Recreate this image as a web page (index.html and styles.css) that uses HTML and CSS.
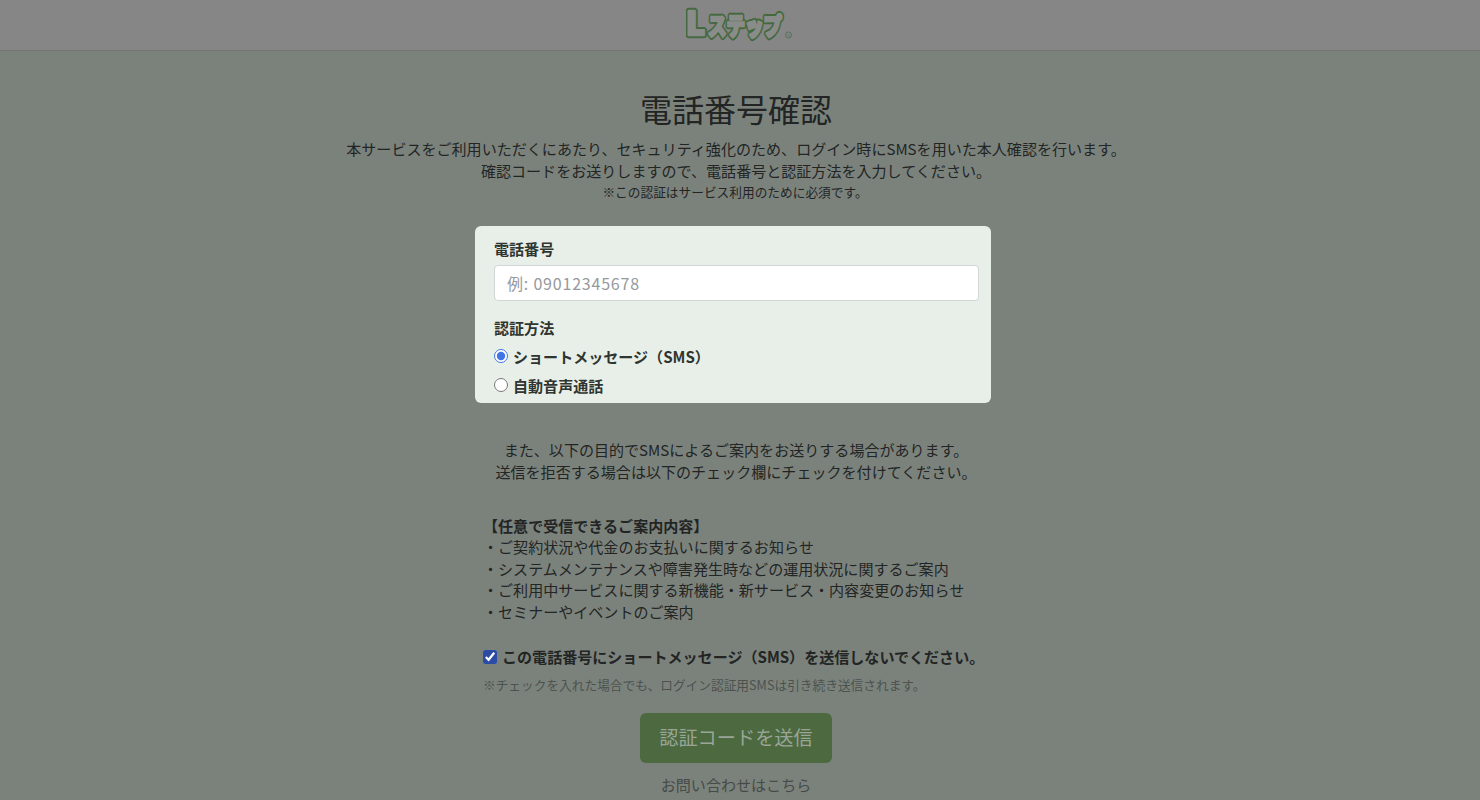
FILE: index.html
```html
<!DOCTYPE html>
<html lang="ja">
<head>
<meta charset="utf-8">
<title>電話番号確認</title>
<link rel="stylesheet" href="styles.css">
</head>
<body>
<header class="topbar">
  <svg class="logo" viewBox="0 0 108 40" width="108" height="40" aria-label="Lステップ">
    <defs>
      <g id="logo-word">
        <text class="logo-l" x="0" y="30">L</text>
        <text class="logo-kana" x="22" y="30" textLength="74" lengthAdjust="spacingAndGlyphs">ステップ</text>
      </g>
    </defs>
    <use class="logo-edge" href="#logo-word"/>
    <use class="logo-core" href="#logo-word"/>
    <circle class="logo-mark" cx="102.500" cy="30" r="3"/>
    <text class="logo-r" x="102.500" y="32">R</text>
  </svg>
</header>
<main class="page">
  <h1 class="title">電話番号確認</h1>
  <p class="lead">本サービスをご利用いただくにあたり、セキュリティ強化のため、ログイン時にSMSを用いた本人確認を行います。<br>確認コードをお送りしますので、電話番号と認証方法を入力してください。</p>
  <p class="required">※この認証はサービス利用のために必須です。</p>
  <form class="card">
    <label class="field-label" for="tel">電話番号</label>
    <input class="tel-input" id="tel" type="text" placeholder="例: 09012345678">
    <div class="field-label method-label">認証方法</div>
    <label class="radio-row"><input type="radio" name="method" checked><span>ショートメッセージ（SMS）</span></label>
    <label class="radio-row"><input type="radio" name="method"><span>自動音声通話</span></label>
  </form>
  <p class="notice">また、以下の目的でSMSによるご案内をお送りする場合があります。<br>送信を拒否する場合は以下のチェック欄にチェックを付けてください。</p>
  <section class="optin">
    <p class="optin-list"><b>【任意で受信できるご案内内容】</b><br>・ご契約状況や代金のお支払いに関するお知らせ<br>・システムメンテナンスや障害発生時などの運用状況に関するご案内<br>・ご利用中サービスに関する新機能・新サービス・内容変更のお知らせ<br>・セミナーやイベントのご案内</p>
    <label class="check-row"><input type="checkbox" checked><span>この電話番号にショートメッセージ（SMS）を送信しないでください。</span></label>
    <p class="check-note">※チェックを入れた場合でも、ログイン認証用SMSは引き続き送信されます。</p>
  </section>
  <button class="submit" type="button">認証コードを送信</button>
  <a class="contact" href="#">お問い合わせはこちら</a>
</main>
</body>
</html>
```
FILE: styles.css
```css
* { box-sizing: border-box; }
html, body { margin: 0; height: 800px; overflow: hidden; }
body {
  background: #7b827c;
  color: #232524;
  font-family: "Noto Sans CJK JP", "Noto Sans", sans-serif;
  font-size: 15.06px;
  line-height: 21.6px;
}
.topbar {
  height: 51px;
  background: #868686;
  border-bottom: 1px solid #747474;
  display: flex;
  justify-content: center;
  padding-top: 5px;
  overflow: hidden;
}
.logo { display: block; margin-right: 1px; }
.logo-l, .logo-kana {
  font-family: "Noto Sans CJK JP", sans-serif;
  font-weight: 900;
}
.logo-l { font-size: 32px; }
.logo-kana { font-size: 24px; }
.logo-edge { fill: #44693f; stroke: #44693f; stroke-width: 6.400px; stroke-linejoin: round; }
.logo-core { fill: #8a8c8a; stroke: #8a8c8a; stroke-width: 2.600px; stroke-linejoin: round; }
.logo-mark { fill: none; stroke: #56725a; stroke-width: 1; }
.logo-r { font-size: 4px; text-anchor: middle; fill: #56725a; }
.page { display: flex; flex-direction: column; align-items: center; padding-right: 8px; }
.title {
  margin: 33px 0 0;
  font-size: 32px;
  line-height: 48px;
  font-weight: 400;
}
.lead { margin: 6px 0 0; text-align: center; }
.required { margin: 0 0 0 -2px; font-size: 12.7px; line-height: 22px; text-align: center; }
.card {
  width: 516px;
  height: 177px;
  margin: 23px 6px 0 0;
  padding: 12px 12px 0 19px;
  background: #e8efe9;
  border-radius: 6px;
  display: flex;
  flex-direction: column;
}
.field-label { font-weight: 700; color: #2f3530; line-height: 22px; }
.tel-input {
  width: 485px;
  height: 36px;
  margin-top: 5px;
  padding: 0 12px;
  background: #fff;
  border: 1px solid #d2d6d6;
  border-radius: 4px;
  font: inherit;
  font-size: 16px;
  letter-spacing: .8px;
}
.tel-input::placeholder { color: #96999d; opacity: 1; }
.method-label { margin-top: 16px; }
.radio-row {
  display: flex;
  align-items: center;
  gap: 5px;
  height: 29px;
  font-weight: 700;
  color: #2f3530;
}
.method-label + .radio-row { margin-top: 3px; }
.radio-row input { width: 14px; height: 14px; margin: 0 0 2px; accent-color: #4274e8; }
.notice { margin: 36px 0 0; text-align: center; }
.optin { width: 516px; margin: 32.600px 6px 0 0; padding-left: 8px; }
.optin-list { margin: 0; line-height: 21.500px; }
.check-row {
  display: flex;
  align-items: center;
  gap: 5px;
  margin-top: 23.300px;
  font-weight: 700;
  white-space: nowrap;
}
.check-row input { width: 14px; height: 14px; margin: 0; accent-color: #2a4ba6; }
.check-note { margin: 7px 0 0; font-size: 12.7px; line-height: 22px; color: #4c524f; }
.submit {
  width: 192px;
  height: 50px;
  margin-top: 17px;
  background: #4c693f;
  border: 0;
  border-radius: 6px;
  color: #99a597;
  font: inherit;
  font-size: 19.2px;
  padding-bottom: 2px;
}
.contact { margin-top: 11px; color: #464b48; text-decoration: none; }
```
